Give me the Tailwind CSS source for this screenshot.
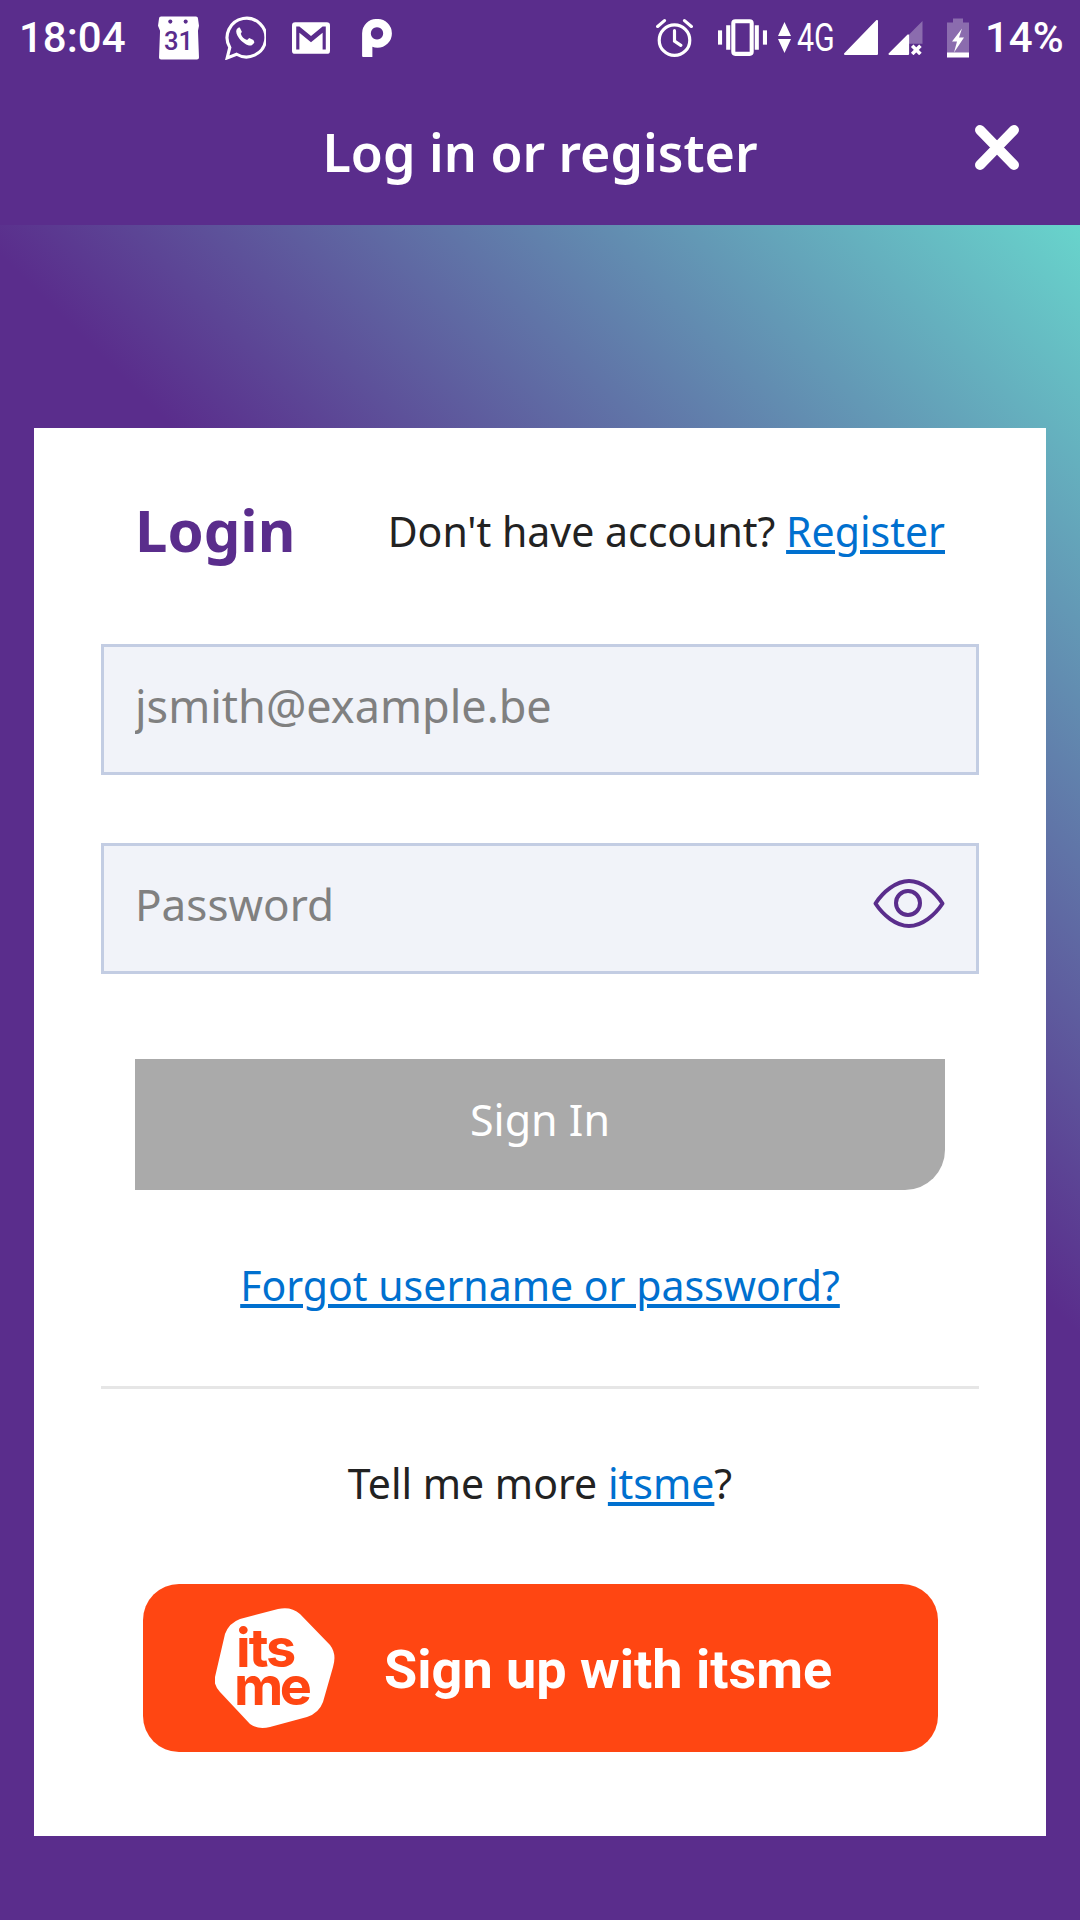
<!DOCTYPE html>
<html lang="en">
<head>
  <meta charset="UTF-8"/>
  <meta name="viewport" content="width=device-width, initial-scale=1.0"/>
  <title>Log in or register</title>
  <script src="https://cdn.jsdelivr.net/npm/@tailwindcss/browser@4"></script>
</head>
<body class="w-[1080px] h-[1920px] overflow-hidden flex flex-col bg-[#5a2d8c] font-['Noto_Sans',sans-serif] text-[#222]">

  <!-- status bar -->
  <div class="h-[75px] flex items-center text-white font-['Roboto',sans-serif] shrink-0">
    <span class="ml-[19px] w-[105px] text-[42px] font-medium leading-none">18:04</span>
    <svg class="ml-[34px] w-[41px] h-[44px]" viewBox="0 0 40 42">
      <path fill="#fff" d="M3 0h34q2 0 2 2l1 7-1 5 1 26q0 2-2 2H3q-2 0-2-2L2 14 0 9l1-7q0-2 2-2z"/>
      <circle cx="12" cy="5" r="2" fill="#5a2d8c"/><circle cx="27" cy="5" r="2" fill="#5a2d8c"/>
      <text x="20" y="33" text-anchor="middle" fill="#5a2d8c" font-family="Roboto" font-weight="500" font-size="25">31</text>
    </svg>
    <svg class="ml-[25px] w-[42px] h-[44px]" viewBox="0 0 40 42" fill="none" stroke="#fff">
      <path stroke-width="3" d="M3 40l2.500-10A18.500 18.500 0 1 1 12 36.500z"/>
      <path fill="#fff" stroke="none" d="M14 11c-2 1-3 3-2 6 2 5 6 9 11 11 3 1 5-1 6-3l-1-2-4-2-2 2c-3-1-5-3-6-6l1-2-2-4z"/>
    </svg>
    <svg class="ml-[26px] w-[38px] h-[32px]" viewBox="0 0 36 30">
      <rect width="36" height="30" rx="3" fill="#fff"/>
      <path fill="#5a2d8c" d="M4 4h3l11 9L29 4h3v22h-3V10L18 19 7 10v16H4z"/>
    </svg>
    <svg class="ml-[32px] w-[30px] h-[38px]" viewBox="0 0 29 37">
      <path fill="#fff" fill-rule="evenodd" d="M0 14A14 14 0 0 1 14.500 0 14 14 0 0 1 29 14 14 14 0 0 1 15 28q-3 0-5-1v10H1q-1 0-1-1zm14.500-6a6 6 0 1 0 .01 0z"/>
    </svg>
    <svg class="ml-[264px] w-[37px] h-[39px]" viewBox="0 0 35 37" fill="none" stroke="#fff" stroke-width="3" stroke-linecap="round">
      <circle cx="17.500" cy="21" r="14.500"/>
      <path d="M17.500 12v10l6 4M1.500 8L8 2.500M33.500 8L27 2.500"/>
    </svg>
    <svg class="ml-[25px] w-[49px] h-[37px]" viewBox="0 0 48 36" fill="#fff">
      <rect x="0" y="11" width="4" height="14"/><rect x="8" y="6" width="4" height="24"/>
      <rect x="36" y="6" width="4" height="24"/><rect x="44" y="11" width="4" height="14"/>
      <rect x="15" y="2" width="18" height="32" rx="2" fill="none" stroke="#fff" stroke-width="4"/>
    </svg>
    <svg class="ml-[11px] w-[13px] h-[33px]" viewBox="0 0 13 31" fill="#fff">
      <path d="M6.500 0L13 14H0zM0 17h13L6.500 31z"/>
    </svg>
    <span class="ml-[6px] w-[38px] text-[38px] leading-none inline-block origin-left scale-x-[0.8] whitespace-nowrap">4G</span>
    <svg class="ml-[9px] w-[34px] h-[35px]" viewBox="0 0 33 34">
      <path fill="#fff" stroke="#fff" stroke-width="2" stroke-linejoin="round" d="M1 33L32 1v32z"/>
    </svg>
    <svg class="ml-[10px] w-[35px] h-[35px]" viewBox="0 0 33 34">
      <path fill="#fff" fill-opacity="0.3" d="M19 15L33 1v22H19z"/>
      <path fill="#fff" stroke="#fff" stroke-width="2" stroke-linejoin="round" d="M1 33l18-18v18z"/>
      <path stroke="#fff" stroke-width="3.500" d="M23 25l8 8M31 25l-8 8"/>
    </svg>
    <svg class="ml-[24px] w-[22px] h-[40px]" viewBox="0 0 22 39">
      <path fill="#fff" fill-opacity="0.3" d="M6 0h10v4h6v31H0V4h6z"/>
      <rect y="34" width="22" height="5" fill="#fff"/>
      <path fill="#fff" d="M15 10L5 23h5l-3 11 10-15h-5z"/>
    </svg>
    <span class="ml-[16px] text-[42px] font-medium leading-none">14%</span>
  </div>

  <!-- header -->
  <header class="relative h-[150px] shrink-0 flex items-center justify-center">
    <h1 class="pt-[4px] text-[52px] font-semibold text-white leading-none">Log in or register</h1>
    <button class="absolute left-[975px] top-[50px] w-[44px] h-[45px]">
      <svg viewBox="0 0 44 45" class="w-[44px] h-[45px]" fill="none" stroke="#fff" stroke-width="10" stroke-linecap="round">
        <path d="M5 5l34 35M39 5L5 40"/>
      </svg>
    </button>
  </header>

  <main class="flex-1 pt-[203px] px-[34px] bg-[linear-gradient(45deg,#5a2d8c_60%,#68d4cc_100%)]">
    <section class="bg-white h-[1408px] px-[67px] flex flex-col">
      <div class="mt-[68px] h-[72px] mx-[34px] flex items-center justify-between">
        <h2 class="pb-[4px] text-[58px] font-bold text-[#5a2d8c] leading-none">Login</h2>
        <p class="text-[41px]">Don't have account? <a href="#" class="text-[#0070cf] underline">Register</a></p>
      </div>

      <form class="contents">
        <input type="text" placeholder="jsmith@example.be" class="mt-[76px] h-[131px] w-full px-[31px] pb-[9px] bg-[#f1f3f9] border-[3px] border-[#c3cde3] text-[45px] placeholder:text-[#808080] shrink-0"/>
        <div class="relative mt-[68px] h-[131px] shrink-0">
          <input type="password" placeholder="Password" class="h-full w-full px-[31px] pb-[9px] bg-[#f1f3f9] border-[3px] border-[#c3cde3] text-[44px] placeholder:text-[#808080]"/>
          <svg class="absolute right-[34px] top-[36px] w-[72px] h-[49px]" viewBox="0 0 72 49" fill="none" stroke="#5a2d8c" stroke-width="4" stroke-linejoin="round">
            <path d="M2.500 24.500C10 13 23 2 36 2s26 11 33.500 22.500C62 36 49 47 36 47S10 36 2.500 24.500z"/>
            <circle cx="35" cy="24" r="12"/>
          </svg>
        </div>
        <button type="button" class="mt-[85px] mx-[34px] h-[131px] shrink-0 pb-[8px] bg-[#aaaaaa] text-white text-[43px] rounded-br-[40px]">Sign In</button>
      </form>

      <a href="#" class="mt-[65px] h-[60px] leading-[60px] text-center text-[41px] text-[#0070cf] underline">Forgot username or password?</a>
      <div class="mt-[71px] h-[3px] bg-[#e6e6e6]"></div>
      <p class="mt-[64px] h-[60px] leading-[60px] text-center text-[41px]">Tell me more <a href="#" class="text-[#0070cf] underline">itsme</a>?</p>

      <a href="#" class="mt-[71px] ml-[42px] mr-[41px] h-[168px] rounded-[36px] bg-[#ff4612] flex items-center text-white">
        <svg class="ml-[72px] w-[120px] h-[120px]" viewBox="0 0 120 120">
          <path fill="#fff" d="M25 11L63 1Q76-2 85 6L115 37Q122 46 118 59L108 94Q104 105 92 109L55 119Q43 122 35 116L5 84Q-2 76 0 69L10 26Q14 15 25 11Z"/>
          <text font-family="Inter" font-weight="700" font-size="54" fill="#ff4612" letter-spacing="-2"><tspan x="21" y="59">its</tspan><tspan x="19" y="97" letter-spacing="-3.500">me</tspan></text>
        </svg>
        <span class="ml-[49px] pt-[4px] font-['Roboto',sans-serif] font-bold text-[54px] leading-none">Sign up with itsme</span>
      </a>
    </section>
  </main>
</body>
</html>
